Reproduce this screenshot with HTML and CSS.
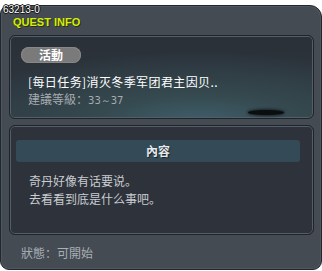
FILE: index.html
```html
<!DOCTYPE html>
<html lang="zh">
<head>
  <meta charset="UTF-8" />
  <title>Quest Info</title>
  <link rel="stylesheet" href="styles.css">
</head>
<body>
  <div class="quest-id">63213-0</div>
  <div class="window">
    <div class="window-title">QUEST INFO</div>

    <div class="card card-top">
      <div class="badge">活動</div>
      <div class="quest-name">[每日任务]消灭冬季军团君主因贝..</div>
      <div class="quest-level">建議等級：<span class="num">33～37</span></div>
      <div class="shadow"></div>
    </div>

    <div class="card card-body">
      <div class="section-head">內容</div>
      <div class="desc">
        奇丹好像有话要说。<br>
        去看看到底是什么事吧。
      </div>
    </div>

    <div class="status">狀態：可開始</div>
  </div>
</body>
</html>
```

FILE: styles.css
```css
* { box-sizing: border-box; }
html, body {
  margin: 0;
  padding: 0;
  background: #fff;
  font-family: "Noto Sans CJK SC", "Liberation Sans", sans-serif;
  font-size: 12px;
}

.quest-id {
  position: absolute;
  top: 4px; left: 3px;
  z-index: 2;
  font-family: "Liberation Sans", sans-serif;
  font-size: 10px;
  line-height: 12px;
  color: #fff;
  text-shadow: -1px 0 #111, 1px 0 #111, 0 -1px #111, 0 1px #111;
}

.window {
  margin-top: 5px;
  width: 322px;
  height: 265px;
  border: 1px solid #22272d;
  border-radius: 9px 12px 9px 9px;
  background: #444b53;
  box-shadow: inset 0 0 0 1px #4f5760;
  padding: 0 0 0 8px;
  display: flex;
  flex-direction: column;
}

.window-title {
  height: 29px;
  padding: 10px 0 0 4px;
  font-family: "Liberation Sans", sans-serif;
  font-weight: bold;
  font-size: 11px;
  line-height: 12px;
  color: #d4ef00;
  text-shadow: 1px 1px 0 #2a2f10;
}

.card {
  width: 305px;
  border: 1px solid #1f242a;
  border-radius: 6px;
  box-shadow: inset 0 0 0 1px #555e68;
  position: relative;
}

.card-top {
  height: 84px;
  padding: 11px 0 0 11px;
  background:
    radial-gradient(ellipse 260px 70px at 62% 105%, #3f5f6b 0%, #35494f 40%, rgba(44,51,60,0) 100%),
    linear-gradient(#2a3038, #2e3740);
}

.badge {
  width: 60px;
  height: 16px;
  border-radius: 8px;
  background: #7a7a7a;
  box-shadow: inset 0 0 0 1px #888;
  color: #fff;
  font-weight: bold;
  text-align: center;
  line-height: 16px;
  font-size: 12px;
}

.quest-name {
  margin: 10px 0 0 7px;
  color: #fff;
  line-height: 17px;
  letter-spacing: 0.4px;
}

.quest-level {
  margin-left: 7px;
  color: #a6abb0;
  line-height: 17px;
}
.quest-level .num {
  font-family: "DejaVu Sans", sans-serif;
  font-size: 10px;
}

.shadow {
  position: absolute;
  left: 238px; top: 74px;
  width: 36px;
  height: 5px;
  border-radius: 50%;
  background: #0b0d0f;
  box-shadow: 0 0 3px 1px rgba(0,0,0,0.6);
}

.card-body {
  margin-top: 6px;
  height: 110px;
  padding: 14px 0 0 6px;
  background: #2d323b;
}

.section-head {
  width: 284px;
  height: 22px;
  border-radius: 3px;
  background: #344b57;
  color: #e6eaec;
  font-weight: bold;
  text-align: center;
  line-height: 22px;
  text-shadow: 1px 1px 0 #1a2228;
}

.desc {
  margin: 10px 0 0 13px;
  color: #c9cdd1;
  line-height: 18px;
}

.status {
  padding: 10px 0 0 12px;
  color: #a9afb5;
  line-height: 16px;
}
```
